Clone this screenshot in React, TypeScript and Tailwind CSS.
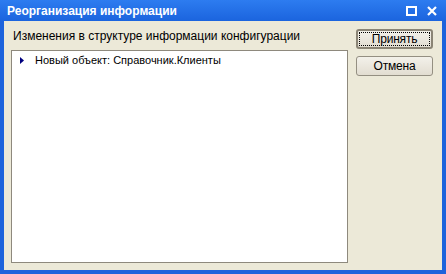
import React from "react";

const ui = { fontFamily: "'Liberation Sans', Arial, sans-serif" };

function XpButton({ label, isDefault }: { label: string; isDefault?: boolean }) {
  return (
    <button
      className={`relative h-[20px] w-[77px] rounded-[3px] bg-gradient-to-b from-[#f3f1ea] to-[#e2ddd1] text-[12px] leading-none tracking-[-0.2px] text-black ${
        isDefault ? "border-2 border-[#8a8475]" : "border border-[#948f82]"
      }`}
      style={ui}
    >
      {isDefault && <span className="absolute inset-[1px] border border-dotted border-black" />}
      <span className="relative">{label}</span>
    </button>
  );
}

export default function App() {
  return (
    <div className="flex h-[274px] w-[446px] flex-col bg-[#1d63dc]" style={ui}>
      {/* title bar */}
      <div className="flex h-[21px] items-center bg-gradient-to-b from-[#2d7cf0] to-[#1b64de] pl-[7px] pr-[9px]">
        <span className="flex-1 text-[12px] font-bold text-white">Реорганизация информации</span>
        <svg width="11" height="10" viewBox="0 0 11 10" className="mr-[10px]">
          <rect x="1" y="1" width="9" height="8" fill="none" stroke="white" strokeWidth="2" />
        </svg>
        <svg width="10" height="10" viewBox="0 0 10 10">
          <path d="M1 1 L9 9 M9 1 L1 9" stroke="white" strokeWidth="2.2" />
        </svg>
      </div>

      {/* body */}
      <div className="mx-[4px] mb-[4px] flex flex-1 bg-[#ece9d8] pl-[7px]">
        <div className="flex flex-col">
          <div className="mt-[8px] h-[21px] pl-[2px] text-[12px] leading-[14px] text-black">
            Изменения в структуре информации конфигурации
          </div>
          <div className="h-[213px] w-[337px] border border-[#8e897d] bg-white">
            <div className="mt-[2px] flex items-center pl-[8px] text-[11px] leading-[14px] text-black">
              <svg width="4" height="7" viewBox="0 0 4 7" className="mr-[11px]">
                <path d="M0 0 L4 3.5 L0 7 Z" fill="#00007f" />
              </svg>
              Новый объект: Справочник.Клиенты
            </div>
          </div>
        </div>
        <div className="ml-[8px] mt-[8px] flex flex-col gap-[7px]">
          <XpButton label="Принять" isDefault />
          <XpButton label="Отмена" />
        </div>
      </div>
    </div>
  );
}
